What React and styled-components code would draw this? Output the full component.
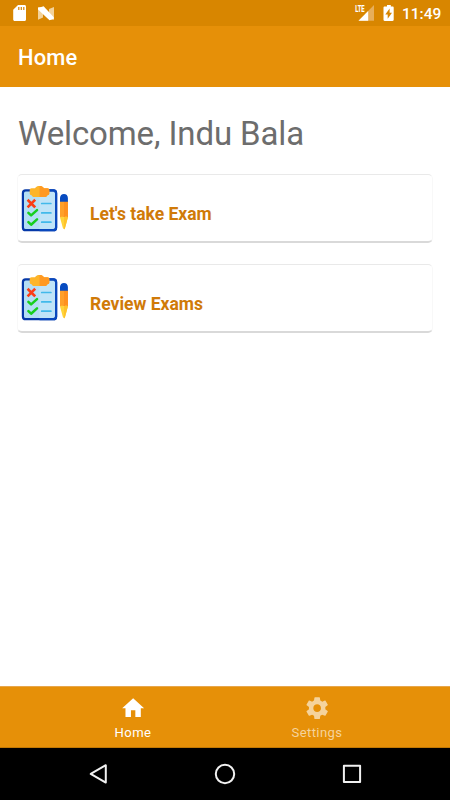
import React, { useState } from 'react';
import styled, { createGlobalStyle } from 'styled-components';

const exams = ["Let's take Exam", "Review Exams"];

const ExamIcon = () => (
  <IconBox width="60" height="60" viewBox="0 0 60 60">
    <rect x="7.8" y="10.4" width="33.4" height="39.9" rx="2.6" fill="#b4def5" />
    <path d="M24.5 10.4h14a2.7 2.7 0 0 1 2.7 2.7v34.5a2.7 2.7 0 0 1-2.7 2.7h-14z" fill="#c0e4f8" />
    <rect x="7.9" y="10.4" width="33.2" height="39.8" rx="2.8" fill="none" stroke="#0538a8" strokeWidth="2.2" />
    <path d="M24.5 10.4h13.8a2.8 2.8 0 0 1 2.8 2.8v34.2a2.8 2.8 0 0 1-2.8 2.8H24.5" fill="none" stroke="#0a48bd" strokeWidth="2.2" />
    <path d="M16.6 8.3h3.2c.9-.2 1-2.3 4.7-2.3s3.8 2.1 4.7 2.3h3.2c1.2 0 1.9.7 1.9 1.9v3.1c0 1.2-.7 2-1.9 2-.5 1-1.2 1.8-2.4 1.8H19c-1.2 0-1.9-.8-2.4-1.8-1.2 0-1.9-.8-1.9-2v-3.1c0-1.2.7-1.9 1.9-1.9z" fill="#fdb52a" />
    <path d="M24.5 6c3.7 0 3.8 2.1 4.7 2.3h3.2c1.2 0 1.9.7 1.9 1.9v3.1c0 1.2-.7 2-1.9 2-.5 1-1.2 1.8-2.4 1.8h-5.5z" fill="#ff9922" />
    <path d="m13.5 20.7 5.8 5.8m0-5.8-5.8 5.8" stroke="#fb3c16" strokeWidth="2.6" strokeLinecap="square" />
    <path d="m13.4 32.8 2.7 2.6 5.9-5.3M13.4 42.1l2.7 2.6 5.9-5.3" fill="none" stroke="#16cf1d" strokeWidth="2.5" strokeLinecap="round" strokeLinejoin="round" />
    <path d="M26.7 23.5h9.2M26.7 32.9h9.2M26.7 42.2h9.2" stroke="#42b9ea" strokeWidth="1.7" strokeLinecap="round" />
    <path d="M45 21h7.9v16.6H45z" fill="#ffa02a" />
    <path d="M49 21h3.9v16.6H49z" fill="#ff9120" />
    <path d="m45 37.5 2.8 10.3q1.1 2.6 2.3 0L52.9 37.5l-1.9-.9-2 .8-2-.8z" fill="#ffd43a" />
    <path d="M49 37.4v12.1q.7-.3 1.1-1.7l2.8-10.3-1.9-.9z" fill="#ffc22c" />
    <path d="M45 21.7v-3.6c0-2.7 1.7-4.2 4-4.2s3.9 1.5 3.9 4.2v3.6z" fill="#074bc0" />
  </IconBox>
);

const App = () => {
  const [active, setActive] = useState("Home");

  return (
    <Contain>
      <GlobalStyle />
      <StatusBar>
        <svg width="60" height="26" viewBox="0 0 60 26">
          <path d="M18 5h6.5c.9 0 1.5.6 1.5 1.5v13c0 .9-.6 1.5-1.5 1.5h-9.8c-.9 0-1.5-.6-1.5-1.5V9.7z" fill="#fff" />
          <path d="M18.8 7v3M21.3 7v3M23.8 7v3" stroke="#d88600" strokeWidth="1.2" />
          <path d="M38 7v12.8l5-2.2V7zM54 7v12.8h-5V9z" fill="#f3d299" />
          <path d="M38 8 43.6 6.3 54 17.4v1l-4.5 1.8L38 9.4z" fill="#fff" />
        </svg>
        <StatusRight>
          <svg width="48" height="26" viewBox="0 0 48 26">
            <path d="M20 5v15.8H4.5z" fill="#e7ae5a" />
            <path d="M14.2 10.9v9.9H4.5z" fill="#fff" />
            <LteBack x="0" y="3.5" width="11" height="9.5" />
            <Lte x="1.2" y="12" textLength="9.3" lengthAdjust="spacingAndGlyphs">LTE</Lte>
            <path d="M33 5h3.8v1.4h1.7c.8 0 1.2.5 1.2 1.2v12.2c0 .7-.4 1.2-1.2 1.2h-7.8c-.8 0-1.2-.5-1.2-1.2V7.6c0-.7.4-1.2 1.2-1.2H33z" fill="#fff" />
            <path d="m35.6 8.6-4.3 5.9h2.4v4.3l4.3-6h-2.4z" fill="#d88600" />
          </svg>
          <Clock>11:49</Clock>
        </StatusRight>
      </StatusBar>
      <Header>Home</Header>
      <Content>
        <Welcome>Welcome, Indu Bala</Welcome>
        {
          exams.map((item, idx) => {
            return (
              <Card key={idx}>
                <ExamIcon />
                <CardTitle>{item}</CardTitle>
              </Card>
            )
          })
        }
      </Content>
      <TabBar>
        <Tab $active={active === "Home"} onClick={() => setActive("Home")}>
          <svg width="26.3" height="26.3" viewBox="0 0 24 24"><path d="M10 20v-6h4v6h5v-8h3L12 3 2 12h3v8z" /></svg>
          <span>Home</span>
        </Tab>
        <Tab $active={active === "Settings"} onClick={() => setActive("Settings")}>
          <svg width="26.3" height="26.3" viewBox="0 0 24 24"><path d="M19.43 12.98c.04-.32.07-.64.07-.98s-.03-.66-.07-.98l2.11-1.65c.19-.15.24-.42.12-.64l-2-3.46c-.12-.22-.39-.3-.61-.22l-2.49 1c-.52-.4-1.08-.73-1.69-.98l-.38-2.65C14.46 2.18 14.25 2 14 2h-4c-.25 0-.46.18-.49.42l-.38 2.65c-.61.25-1.17.59-1.69.98l-2.49-1c-.23-.09-.49 0-.61.22l-2 3.46c-.13.22-.07.49.12.64l2.11 1.65c-.04.32-.07.65-.07.98s.03.66.07.98l-2.11 1.65c-.19.15-.24.42-.12.64l2 3.46c.12.22.39.3.61.22l2.49-1c.52.4 1.08.73 1.69.98l.38 2.65c.03.24.24.42.49.42h4c.25 0 .46-.18.49-.42l.38-2.65c.61-.25 1.17-.59 1.69-.98l2.49 1c.23.09.49 0 .61-.22l2-3.46c.12-.22.07-.49-.12-.64zM12 15.5c-1.93 0-3.5-1.57-3.5-3.5s1.57-3.5 3.5-3.5 3.5 1.57 3.5 3.5-1.57 3.5-3.5 3.5z" /></svg>
          <span>Settings</span>
        </Tab>
      </TabBar>
      <SystemNav>
        <svg width="24" height="24" viewBox="0 0 24 24"><path d="M19.8 3.2v17.4L4.7 11.9z" /></svg>
        <svg width="24" height="24" viewBox="0 0 24 24"><circle cx="12" cy="12" r="9.2" /></svg>
        <svg width="24" height="24" viewBox="0 0 24 24"><rect x="3.9" y="3.8" width="16.2" height="16.2" /></svg>
      </SystemNav>
    </Contain>
  );
};

const GlobalStyle = createGlobalStyle`
  * {
    box-sizing: border-box;
  }
  body {
    margin: 0;
    font-family: Roboto, sans-serif;
    background: #fff;
  }
`;

const Contain = styled.div`
  display: flex;
  flex-direction: column;
  height: 100vh;
`;

const StatusBar = styled.div`
  display: flex;
  justify-content: space-between;
  height: 26px;
  flex: none;
  padding-right: 9px;
  background: #d88600;
`;

const StatusRight = styled.div`
  display: flex;
  align-items: center;
`;

const LteBack = styled.rect`
  fill: #d88600;
`;

const Lte = styled.text`
  font-size: 9px;
  font-weight: 700;
  fill: #fff;
  stroke: #fff;
  stroke-width: 0.15px;
`;

const Clock = styled.span`
  width: 39px;
  font-size: 15.5px;
  font-weight: 500;
  line-height: 26px;
  padding-top: 1px;
  color: #fff;
  white-space: nowrap;
`;

const Header = styled.header`
  height: 61px;
  flex: none;
  padding: 1px 18px 0;
  background: #e69008;
  color: #fff;
  font-size: 21.9px;
  font-weight: 500;
  letter-spacing: 0.2px;
  line-height: 62px;
`;

const Content = styled.main`
  flex: 1;
  padding: 23px 17px 0;
`;

const Welcome = styled.h1`
  margin: 0 0 20.3px;
  padding-left: 1px;
  height: 44px;
  line-height: 47px;
  font-size: 33px;
  font-weight: 400;
  letter-spacing: -0.12px;
  color: #6d6d6d;
  white-space: nowrap;
`;

const Card = styled.section`
  display: flex;
  height: 69.2px;
  margin-bottom: 20.1px;
  border: 1px solid #e9e9e9;
  border-bottom: 2px solid #d9d9d9;
  border-left-color: #f8f8f8;
  border-right-color: #f8f8f8;
  border-radius: 5px;
  cursor: pointer;
`;

const IconBox = styled.svg`
  flex: none;
  margin: 4.9px 0 0 -3px;
`;

const CardTitle = styled.span`
  margin-left: 15px;
  padding-top: 28px;
  font-size: 17.5px;
  font-weight: 700;
  line-height: 22.4px;
  color: #d07a08;
`;

const TabBar = styled.nav`
  display: flex;
  justify-content: center;
  height: 62px;
  flex: none;
  background: #e69008;
  border-top: 1px solid #e7a64b;
  border-bottom: 1px solid #c17805;
`;

const Tab = styled.div`
  display: flex;
  flex-direction: column;
  align-items: center;
  width: 184px;
  padding-top: 8px;
  font-size: 13.1px;
  letter-spacing: 0.4px;
  line-height: 23px;
  color: ${(props) => props.$active ? "#fff" : "#f5d39c"};
  cursor: pointer;

  & svg {
    fill: currentColor;
  }
`;

const SystemNav = styled.div`
  display: flex;
  justify-content: center;
  align-items: center;
  gap: 103px;
  height: 52px;
  flex: none;
  background: #000;

  & svg {
    fill: none;
    stroke: #f1f1f1;
    stroke-width: 2;
    stroke-linejoin: round;
  }
`;

export default App;
